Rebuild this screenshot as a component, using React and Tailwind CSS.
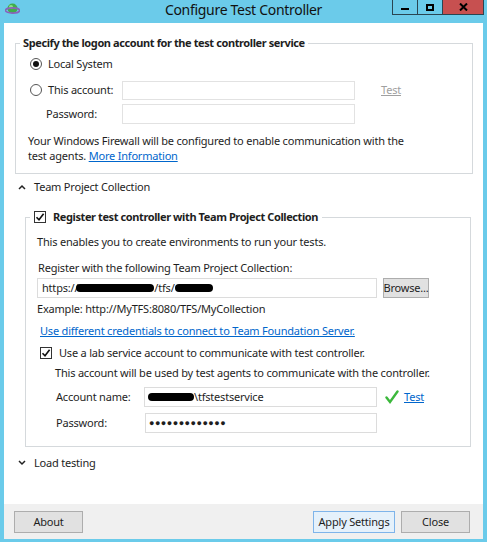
import React from "react";

function Radio({ checked }) {
  return (
    <span className="w-[12px] h-[12px] rounded-full border border-[#555] bg-white flex items-center justify-center shrink-0">
      {checked && <span className="w-[6px] h-[6px] rounded-full bg-[#111]" />}
    </span>
  );
}

function Check() {
  return (
    <span className="w-[12px] h-[12px] border border-[#333] bg-white flex items-center justify-center shrink-0">
      <svg width="10" height="10" viewBox="0 0 10 10">
        <path d="M1.5 5.2 L4 7.8 L8.6 1.8" fill="none" stroke="#111" strokeWidth="1.6" />
      </svg>
    </span>
  );
}

function Blob({ w }) {
  return <span className={`inline-block h-[8px] bg-black rounded-full align-middle ${w}`} />;
}

export default function App() {
  return (
    <div className="w-[487px] h-[542px] bg-[#6bcbea] flex flex-col font-['Noto_Sans',sans-serif] text-[11px] tracking-[-0.2px] text-[#1e1e1e] overflow-hidden">
      {/* title bar */}
      <div className="h-[23px] grid grid-cols-[1fr_auto_1fr] shrink-0">
        <div className="pl-[5px] pt-[2px]">
          <svg width="15" height="15" viewBox="0 0 15 15">
            <circle cx="7.5" cy="6.5" r="5" fill="#3fae4a" />
            <circle cx="6" cy="5" r="2" fill="#8ee08a" />
            <ellipse cx="7.5" cy="8.5" rx="7" ry="2.6" fill="none" stroke="#8a63b8" strokeWidth="1.6" />
          </svg>
        </div>
        <div className="text-[14px] tracking-[-0.3px] leading-[19px] text-[#111]">Configure Test Controller</div>
        <div className="flex justify-end pr-[3px]">
          <div className="flex h-[15px] border border-t-0 border-[#2a4552]">
            <div className="w-[25px] flex items-center justify-center border-r border-[#2a4552]">
              <span className="w-[8px] h-[2px] bg-black mt-[3px]" />
            </div>
            <div className="w-[25px] flex items-center justify-center border-r border-[#2a4552]">
              <span className="w-[8px] h-[7px] border-2 border-black" />
            </div>
            <div className="w-[40px] bg-[#c75050] flex items-center justify-center">
              <svg width="9" height="8" viewBox="0 0 9 8">
                <path d="M1 0.5 L8 7.5 M8 0.5 L1 7.5" stroke="#000" strokeWidth="2" />
              </svg>
            </div>
          </div>
        </div>
      </div>

      {/* content */}
      <div className="flex-1 mx-[4px] bg-white flex flex-col">
        <fieldset className="mt-[12px] ml-[11px] mr-[10px] border border-[#d5d9dc] p-0">
          <legend className="ml-[4px] px-[3px] font-bold tracking-[-0.4px] leading-[16px]">
            Specify the logon account for the test controller service
          </legend>
          <div className="pl-[12px] pb-[10px]">
            <div className="pt-[4px] h-[22px] flex items-center gap-[6px] pl-[2px]">
              <Radio checked />
              <span>Local System</span>
            </div>
            <div className="mt-[7px] h-[20px] flex items-center pl-[2px]">
              <div className="w-[92px] flex items-center gap-[6px]">
                <Radio />
                <span>This account:</span>
              </div>
              <div className="w-[233px] h-[19px] border border-[#e2e2e2]" />
              <span className="ml-[26px] text-[#a0a0a0] underline">Test</span>
            </div>
            <div className="mt-[4px] h-[20px] flex items-center">
              <span className="w-[94px] pl-[18px]">Password:</span>
              <div className="w-[233px] h-[20px] border border-[#e2e2e2]" />
            </div>
            <p className="mt-[9px] leading-[15px]">
              Your Windows Firewall will be configured to enable communication with the
              <br />
              test agents. <span className="text-[#0066cc] underline">More Information</span>
            </p>
          </div>
        </fieldset>

        <div className="mt-[5px] h-[16px] flex items-center pl-[14px]">
          <svg width="8" height="6" viewBox="0 0 8 6">
            <path d="M1 5 L4 2 L7 5" fill="none" stroke="#222" strokeWidth="1.5" />
          </svg>
          <span className="ml-[8px]">Team Project Collection</span>
        </div>

        <fieldset className="mt-[14px] ml-[21px] mr-[12px] border border-[#d5d9dc] p-0">
          <legend className="ml-[4px] px-[4px] leading-[16px] flex items-center gap-[7px]">
            <Check />
            <span className="font-bold tracking-[-0.4px]">Register test controller with Team Project Collection</span>
          </legend>
          <div className="pl-[11px] pb-[13px]">
            <div className="mt-[9px] leading-[16px]">This enables you to create environments to run your tests.</div>
            <div className="mt-[10px] leading-[16px] pl-[1px]">Register with the following Team Project Collection:</div>
            <div className="mt-[2px] flex gap-[6px]">
              <div className="w-[340px] h-[20px] border border-[#dcdcdc] flex items-center pl-[4px]">
                <span>https://</span>
                <Blob w="w-[78px] -ml-[2px]" />
                <span>/tfs/</span>
                <Blob w="w-[38px]" />
              </div>
              <div className="w-[46px] h-[20px] bg-[#e1e1e1] border border-[#adadad] flex items-center justify-center">
                Browse...
              </div>
            </div>
            <div className="mt-[3px] leading-[16px]">Example: http://MyTFS:8080/TFS/MyCollection</div>
            <div className="mt-[6px] leading-[16px] pl-[3px] text-[#0066cc] underline">
              Use different credentials to connect to Team Foundation Server.
            </div>
            <div className="mt-[6px] h-[16px] flex items-center gap-[7px] pl-[3px]">
              <Check />
              <span>Use a lab service account to communicate with test controller.</span>
            </div>
            <div className="mt-[4px] leading-[16px] pl-[18px]">
              This account will be used by test agents to communicate with the controller.
            </div>
            <div className="mt-[6px] h-[20px] flex items-center pl-[19px]">
              <span className="w-[88px]">Account name:</span>
              <div className="w-[233px] h-[20px] border border-[#dcdcdc] flex items-center pl-[3px]">
                <Blob w="w-[46px]" />
                <span>\tfstestservice</span>
              </div>
              <svg className="ml-[8px]" width="14" height="14" viewBox="0 0 14 14">
                <path d="M1.5 7.5 L5 12 L12.5 1.5" fill="none" stroke="#3cb83c" strokeWidth="2.4" strokeLinecap="round" />
              </svg>
              <span className="ml-[5px] text-[#0066cc] underline">Test</span>
            </div>
            <div className="mt-[6px] h-[20px] flex items-center pl-[19px]">
              <span className="w-[89px]">Password:</span>
              <div className="w-[232px] h-[20px] border border-[#dcdcdc] flex items-center pl-[3px] text-[9px] tracking-[0.5px]">
                ●●●●●●●●●●●●●
              </div>
            </div>
          </div>
        </fieldset>

        <div className="mt-[8px] h-[16px] flex items-center pl-[14px]">
          <svg width="8" height="6" viewBox="0 0 8 6">
            <path d="M1 1 L4 4 L7 1" fill="none" stroke="#222" strokeWidth="1.5" />
          </svg>
          <span className="ml-[8px]">Load testing</span>
        </div>
      </div>

      {/* footer */}
      <div className="h-[35px] mx-[4px] bg-[#f0f0f0] flex items-start pt-[7px] pl-[10px] pr-[13px] shrink-0">
        <div className="w-[69px] h-[22px] bg-[#e1e1e1] border border-[#adadad] flex items-center justify-center">About</div>
        <div className="flex-1" />
        <div className="w-[82px] h-[22px] bg-[#e5f1fb] border border-[#7eb4ea] flex items-center justify-center">Apply Settings</div>
        <div className="ml-[6px] w-[69px] h-[22px] bg-[#e1e1e1] border border-[#adadad] flex items-center justify-center">Close</div>
      </div>
      <div className="h-[3px] shrink-0" />
    </div>
  );
}
